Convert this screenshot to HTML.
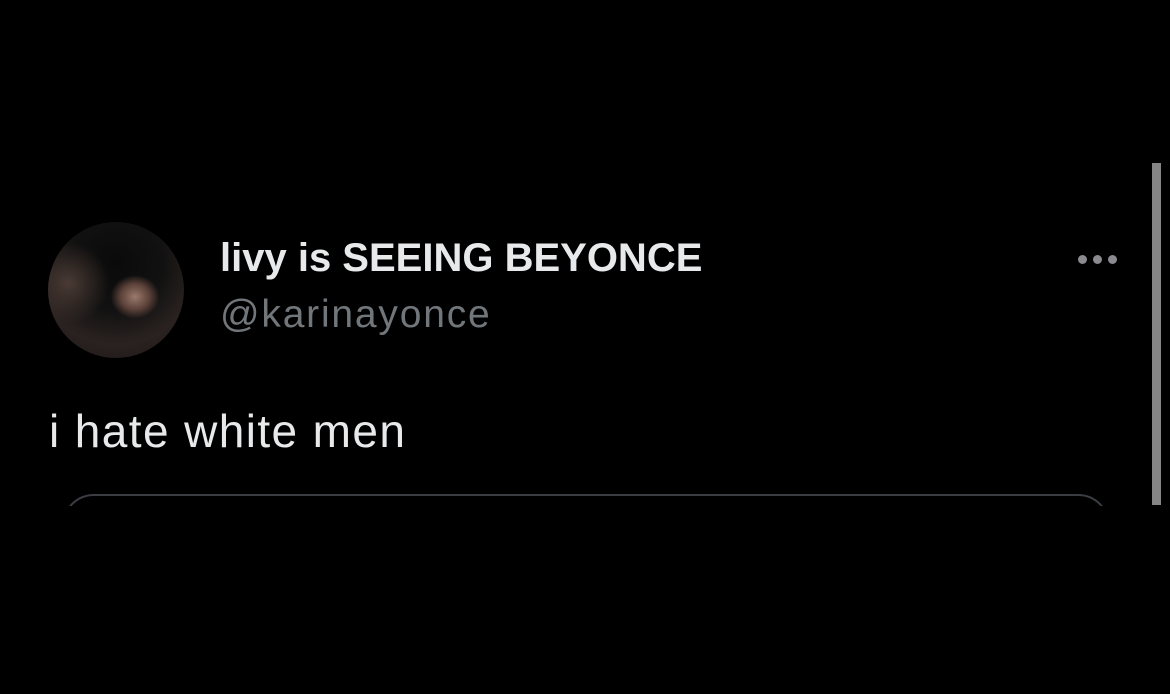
<!DOCTYPE html>
<html><head><style>
body{margin:0;width:1170px;height:694px;background:#000;overflow:hidden;position:relative;font-family:"Liberation Sans",Arial,sans-serif}
.av{position:absolute;left:48px;top:222px;width:136px;height:136px;border-radius:50%;background:radial-gradient(ellipse 18% 16% at 64% 55%,#9a7a6c 0,#5a4038 60%,transparent 100%),radial-gradient(circle at 15% 45%,#4a3a34 0,transparent 30%),radial-gradient(circle at 50% 30%,#0a0a0a 0,#111 40%,#2a2220 70%,#1a1616 100%)}
.name{position:absolute;left:220px;top:236px;font-size:40px;font-weight:bold;color:#e7e9ea;white-space:nowrap}
.handle{position:absolute;left:220px;top:293px;font-size:39px;letter-spacing:1.8px;color:#71767b}
.txt{position:absolute;left:49px;top:404px;font-size:46px;letter-spacing:1.4px;color:#e7e9ea}
.dot{position:absolute;top:255px;width:9px;height:9px;border-radius:50%;background:#8a8a8f}
.card{position:absolute;left:62px;top:494px;width:1044px;height:60px;border:2px solid #3a3d42;border-radius:32px}
.clip{position:absolute;left:0;top:506px;width:1170px;height:188px;background:#000}
.sb{position:absolute;left:1152px;top:163px;width:9px;height:342px;background:#858585}
</style></head><body>
<div class="av"></div>
<div class="name">livy is SEEING BEYONCE</div>
<div class="handle">@karinayonce</div>
<div class="dot" style="left:1078px"></div>
<div class="dot" style="left:1093px"></div>
<div class="dot" style="left:1108px"></div>
<div class="txt">i hate white men</div>
<div class="card"></div>
<div class="clip"></div>
<div class="sb"></div>
</body></html>
